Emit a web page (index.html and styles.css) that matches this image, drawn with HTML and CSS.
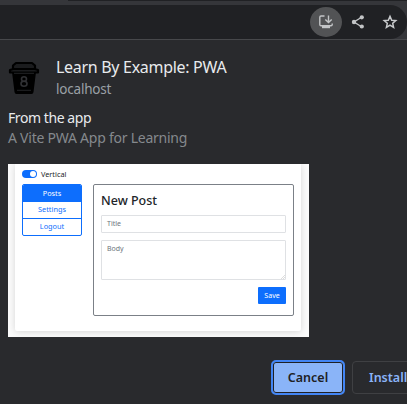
FILE: index.html
```html
<!DOCTYPE html>
<html lang="en">
<head>
<meta charset="utf-8">
<title>Install app</title>
<link rel="stylesheet" href="styles.css">
</head>
<body>
<header class="toolbar">
  <div class="tab-edge"></div>
  <div class="omnibox">
    <span class="install-icon">
      <svg width="16" height="16" viewBox="0 0 16 16" fill="none" stroke="#c3c5c7" stroke-width="1.4"><path d="M6.5 2H3Q1.8 2 1.8 3.2V10.5Q1.8 11.8 3 11.8H13Q14.2 11.8 14.2 10.5V9.5"/><path d="M10.5 1.5V8M7.3 5.4L10.5 8.6L13.7 5.4"/><path d="M4 12H12V14.2H4Z" fill="#c3c5c7" stroke="none"/></svg>
    </span>
    <svg class="share" width="14" height="16" viewBox="0 0 14 16"><path d="M11 3L3 8L11 13" fill="none" stroke="#c3c5c7" stroke-width="1.4"/><g fill="#c3c5c7"><circle cx="10.8" cy="3.3" r="2.1"/><circle cx="3" cy="8" r="2.2"/><circle cx="10.8" cy="12.5" r="2.1"/></g></svg>
    <svg class="star" width="16" height="16" viewBox="0 0 16 16"><path d="M8 2.4L9.7 6.2L13.8 6.6L10.7 9.3L11.6 13.4L8 11.2L4.4 13.4L5.3 9.3L2.2 6.6L6.3 6.2Z" fill="none" stroke="#c8cacc" stroke-width="1.5"/></svg>
  </div>
</header>
<main class="dialog">
  <section class="app">
    <svg class="cup" width="32" height="34" viewBox="0 0 32 34"><path d="M8 2H24L27 4.5V8L30 9V11.5H2V9L5 8V4.5Z" fill="#1b1c1e" stroke="#000" stroke-width="2.2" stroke-linejoin="round"/><path d="M5 8H27" stroke="#000" stroke-width="2"/><path d="M4 11H28L25.5 31Q25.3 33 23.5 33H8.5Q6.7 33 6.5 31Z"/><path d="M6 12.3H26M9 29.3H23" stroke="#222326" stroke-width="1"/><g fill="none" stroke="#303134" stroke-width="1.6"><ellipse cx="16" cy="18" rx="2.5" ry="2.3"/><ellipse cx="16" cy="22.8" rx="3" ry="2.5"/></g></svg>
    <div class="names"><h1>Learn By Example: PWA</h1><p>localhost</p></div>
  </section>
  <section class="about"><h2>From the app</h2><p>A Vite PWA App for Learning</p></section>
  <section class="preview">
    <div class="sheet">
      <div class="toggle-row"><i class="switch"></i><span>Vertical</span></div>
      <div class="columns">
        <nav><b class="active">Posts</b><b>Settings</b><b>Logout</b></nav>
        <div class="form">
          <h3>New Post</h3>
          <div class="field title">Title</div>
          <div class="field body">Body<svg class="grip" width="4" height="4" viewBox="0 0 4 4"><path d="M0 4L4 0M2 4L4 2" stroke="#bbb" stroke-width=".5"/></svg></div>
          <div class="save">Save</div>
        </div>
      </div>
    </div>
  </section>
  <footer><button class="cancel">Cancel</button><button class="install">Install</button></footer>
</main>
</body>
</html>
```
FILE: styles.css
```css
* { box-sizing: border-box; }
body { margin: 0; width: 407px; height: 404px; overflow: hidden; background: #292a2d; font-family: "Noto Sans", sans-serif; }
h1, h2, h3, p { margin: 0; font-weight: 400; white-space: nowrap; }
.toolbar { height: 40px; background: #35363a; border-bottom: 1px solid #47484b; }
.tab-edge { height: 1px; margin-left: 68px; background: #202124; }
.omnibox { height: 34px; margin-top: 4px; background: #202124; border-radius: 0 17px 17px 0; display: flex; align-items: center; padding-left: 310px; }
.install-icon { width: 32px; height: 30px; border-radius: 50%; background: #525355; display: flex; align-items: center; justify-content: center; }
.share { margin-left: 9px; }
.star { margin-left: 17px; }
.dialog { padding: 16px 0 0 8px; }
.app { display: flex; height: 50px; }
.cup { margin: 5px 16px 0 0; }
h1 { font-size: 16px; line-height: 22px; color: #e8eaed; letter-spacing: -0.3px; }
.names p { font-size: 13.5px; line-height: 23px; color: #9aa0a6; letter-spacing: -0.2px; }
.about h2 { font-size: 14px; line-height: 20px; color: #e8eaed; padding-top: 2px; letter-spacing: -0.43px; }
.about p { font-size: 14px; line-height: 20px; color: #85898d; letter-spacing: -0.24px; }
.preview { margin-top: 16px; width: 301px; height: 173px; background: #fbfbfb; padding: 0 8px 6px 7px; overflow: hidden; }
.sheet { height: 167px; background: #fff; border-radius: 0 0 2px 2px; box-shadow: 0 1px 7px rgba(0,0,0,.15); padding: 5px 7px 0; }
.toggle-row { height: 10px; display: flex; align-items: center; gap: 4px; font-size: 7.3px; color: #212529; }
.switch { width: 15px; height: 8px; border-radius: 4px; background: #0d6efd; display: flex; justify-content: flex-end; padding: 1px; }
.switch::after { content: ""; width: 6px; height: 6px; border-radius: 50%; background: #fff; }
.columns { display: flex; gap: 11px; margin-top: 5px; align-items: flex-start; }
nav { width: 60px; height: 52px; border: 1px solid #0d6efd; border-radius: 2px; overflow: hidden; display: flex; flex-direction: column; }
nav b { flex: 1; font-size: 7.3px; font-weight: 400; line-height: 16px; text-align: center; color: #0d6efd; }
nav b + b { border-top: 1px solid #0d6efd; line-height: 15px; }
nav .active { background: #0d6efd; color: #fff; }
.form { width: 201px; height: 132px; border: 1px solid #7b8087; border-radius: 2px; padding: 7px; display: flex; flex-direction: column; }
h3 { font-size: 12.5px; font-weight: 500; line-height: 17px; color: #212529; margin-bottom: 6px; }
.field { border: 1px solid #dfe1e4; border-radius: 1px; font-size: 7px; line-height: 16px; color: #6c757d; padding-left: 5px; }
.title { height: 18px; }
.body { height: 40px; margin: 7px 0; display: flex; justify-content: space-between; }
.grip { align-self: flex-end; }
.save { align-self: flex-end; width: 28px; height: 17px; background: #0d6efd; color: #fff; border-radius: 1px; font-size: 7px; line-height: 17px; text-align: center; }
footer { display: flex; align-items: center; margin: 23px 0 0 263px; gap: 7px; }
button { flex: none; font: 600 12.5px "Noto Sans", sans-serif; padding: 0; }
.cancel { width: 74px; height: 35px; border: 2px solid #4285f4; border-radius: 5px; background: #8ab4f8; color: #202124; box-shadow: inset 0 0 0 1px #202124; }
.install { width: 73px; height: 33px; border: 1px solid #3f4043; border-radius: 4px; background: none; color: #8ab4f8; text-align: left; padding-left: 16px; }
```
